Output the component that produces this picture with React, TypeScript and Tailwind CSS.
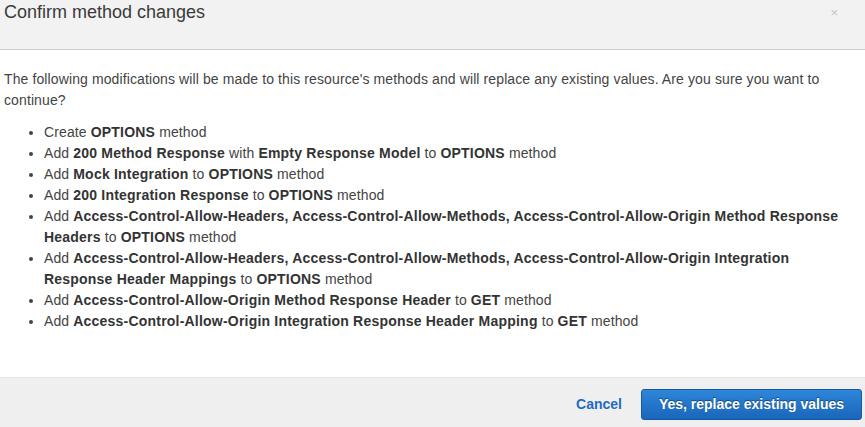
import React from 'react';

const items: React.ReactNode[] = [
  <>Create <b>OPTIONS</b> method</>,
  <>Add <b>200 Method Response</b> with <b>Empty Response Model</b> to <b>OPTIONS</b> method</>,
  <>Add <b>Mock Integration</b> to <b>OPTIONS</b> method</>,
  <>Add <b>200 Integration Response</b> to <b>OPTIONS</b> method</>,
  <>
    Add <b>Access-Control-Allow-Headers, Access-Control-Allow-Methods, Access-Control-Allow-Origin Method Response Headers</b> to{' '}
    <b>OPTIONS</b> method
  </>,
  <>
    Add <b>Access-Control-Allow-Headers, Access-Control-Allow-Methods, Access-Control-Allow-Origin Integration Response Header Mappings</b>{' '}
    to <b>OPTIONS</b> method
  </>,
  <>Add <b>Access-Control-Allow-Origin Method Response Header</b> to <b>GET</b> method</>,
  <>Add <b>Access-Control-Allow-Origin Integration Response Header Mapping</b> to <b>GET</b> method</>,
];

export default function App() {
  return (
    <div className="w-[865px] h-[427px] flex flex-col bg-white font-['Liberation_Sans',Arial,sans-serif] text-[#444]">
      {/* Header */}
      <div className="h-[50px] shrink-0 bg-[#f2f2f2] border-b border-[#cccccc] flex items-start justify-between pl-[4px] pr-[27px]">
        <h3 className="text-[18px] leading-[22px] mt-[1px] text-[#3a3a3a]">Confirm method changes</h3>
        <button className="text-[13px] leading-none mt-[6px] text-[#c4c4c4]">×</button>
      </div>

      {/* Body */}
      <div className="flex-1 pl-[4px] pr-[20px] pt-[19px] text-[14px] leading-[21px] tracking-[0.11px]">
        <p>
          The following modifications will be made to this resource's methods and will replace any existing values. Are you sure
          you want to continue?
        </p>
        <ul className="list-disc pl-[40px] mt-[11px] [&_b]:text-[#333] [&_b]:tracking-[0.21px]">
          {items.map((item, i) => (
            <li key={i}>{item}</li>
          ))}
        </ul>
      </div>

      {/* Footer */}
      <div className="h-[50px] shrink-0 bg-[#efefef] border-t border-[#e3e3e3] flex items-center justify-end gap-[19px] pr-[3px] pt-[3px]">
        <button className="text-[14px] font-bold text-[#1f6bbf]">Cancel</button>
        <button className="h-[31px] w-[221px] rounded-[3px] border border-[#1659a6] bg-gradient-to-b from-[#2e86d9] to-[#1a66bb] text-[14px] font-bold text-white [text-shadow:0_-1px_1px_rgba(0,0,0,0.45)]">
          Yes, replace existing values
        </button>
      </div>
    </div>
  );
}
